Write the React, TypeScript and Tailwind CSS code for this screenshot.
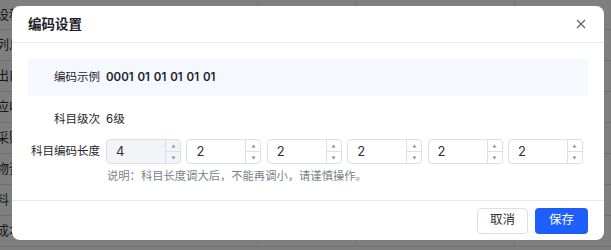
import React from "react";

const rows = ["设科", "列息", "出口", "应收", "采购", "物资", "料", "成本"];

function Spin({ value, disabled }: { value: string; disabled?: boolean }) {
  return (
    <div
      className={`flex h-[25px] w-[75px] shrink-0 rounded-[4px] border border-[#dcdfe6] ${
        disabled ? "bg-[#f3f4f7]" : "bg-white"
      }`}
    >
      <div className="flex flex-1 items-center pl-[9px] text-[13px] text-[#303133]">{value}</div>
      <div className="flex w-[15px] flex-col border-l border-[#dcdfe6]">
        <div className="flex flex-1 items-center justify-center border-b border-[#dcdfe6]">
          <svg width="5" height="4" viewBox="0 0 5 4">
            <path d="M2.5 0.5 L4.5 3.5 L0.5 3.5 Z" fill="#8a8f99" />
          </svg>
        </div>
        <div className="flex flex-1 items-center justify-center">
          <svg width="5" height="4" viewBox="0 0 5 4">
            <path d="M0.5 0.5 L4.5 0.5 L2.5 3.5 Z" fill="#8a8f99" />
          </svg>
        </div>
      </div>
    </div>
  );
}

export default function App() {
  return (
    <div className="relative h-[250px] w-[611px] overflow-hidden bg-white font-['Inter','Noto_Sans_CJK_SC',sans-serif]">
      {/* background table */}
      <div className="flex flex-col">
        {rows.map((t, i) => (
          <div
            key={i}
            className={`flex border-b border-[#e2e2e2] ${i === 0 ? "h-[30px]" : "h-[31px]"}`}
          >
            <div className="flex w-[258px] items-center overflow-hidden border-r border-[#e2e2e2] text-[13px] text-[#333]">
              <span className="-ml-[4px] whitespace-nowrap">{t}</span>
            </div>
            <div className="w-[99px] border-r border-[#e2e2e2]" />
            <div className="w-[158px] border-r border-[#e2e2e2]" />
            <div className="flex-1" />
          </div>
        ))}
      </div>
      {/* overlay */}
      <div className="absolute inset-0 bg-black/50" />
      {/* modal */}
      <div className="absolute left-[12px] top-[6px] flex h-[234px] w-[592px] flex-col rounded-[8px] bg-white">
        <div className="flex h-[37px] shrink-0 items-center justify-between border-b border-[#e8e9ec] pl-[16px] pr-[18px]">
          <span className="text-[13.5px] font-semibold text-[#1d2129]">编码设置</span>
          <svg width="10" height="10" viewBox="0 0 10 10">
            <path d="M1 1 L9 9 M9 1 L1 9" stroke="#5b6270" strokeWidth="1.2" />
          </svg>
        </div>
        <div className="flex flex-1 flex-col">
          <div className="mx-[16px] mt-[16px] flex h-[37px] items-center bg-[#f5f8fe] text-[11.5px]">
            <span className="w-[72px] text-right text-[#1f2329]">编码示例</span>
            <span className="ml-[6px] font-semibold text-[#1d2129] [word-spacing:1px]">
              0001 01 01 01 01 01
            </span>
          </div>
          <div className="mt-[13px] flex h-[22px] items-center text-[11.5px]">
            <span className="w-[88px] text-right text-[#1f2329]">科目级次</span>
            <span className="ml-[6px] text-[#1f2329]">6级</span>
          </div>
          <div className="mt-[8px] flex items-center">
            <span className="w-[88px] text-right text-[11.5px] text-[#1f2329]">科目编码长度</span>
            <div className="ml-[6px] flex gap-[5.4px]">
              <Spin value="4" disabled />
              <Spin value="2" />
              <Spin value="2" />
              <Spin value="2" />
              <Spin value="2" />
              <Spin value="2" />
            </div>
          </div>
          <div className="mt-[4px] pl-[95px] text-[11.3px] leading-[16px] text-[#7a7f88]">
            说明：科目长度调大后，不能再调小，请谨慎操作。
          </div>
        </div>
        <div className="flex h-[40px] shrink-0 items-center justify-end gap-[7px] border-t border-[#e8e9ec] pr-[16px]">
          <button className="flex h-[26px] w-[51px] items-center justify-center rounded-[4px] border border-[#dcdfe6] bg-white text-[12.5px] text-[#303133]">
            取消
          </button>
          <button className="flex h-[26px] w-[53px] items-center justify-center rounded-[4px] bg-[#1e5eff] text-[12.5px] text-white">
            保存
          </button>
        </div>
      </div>
    </div>
  );
}
